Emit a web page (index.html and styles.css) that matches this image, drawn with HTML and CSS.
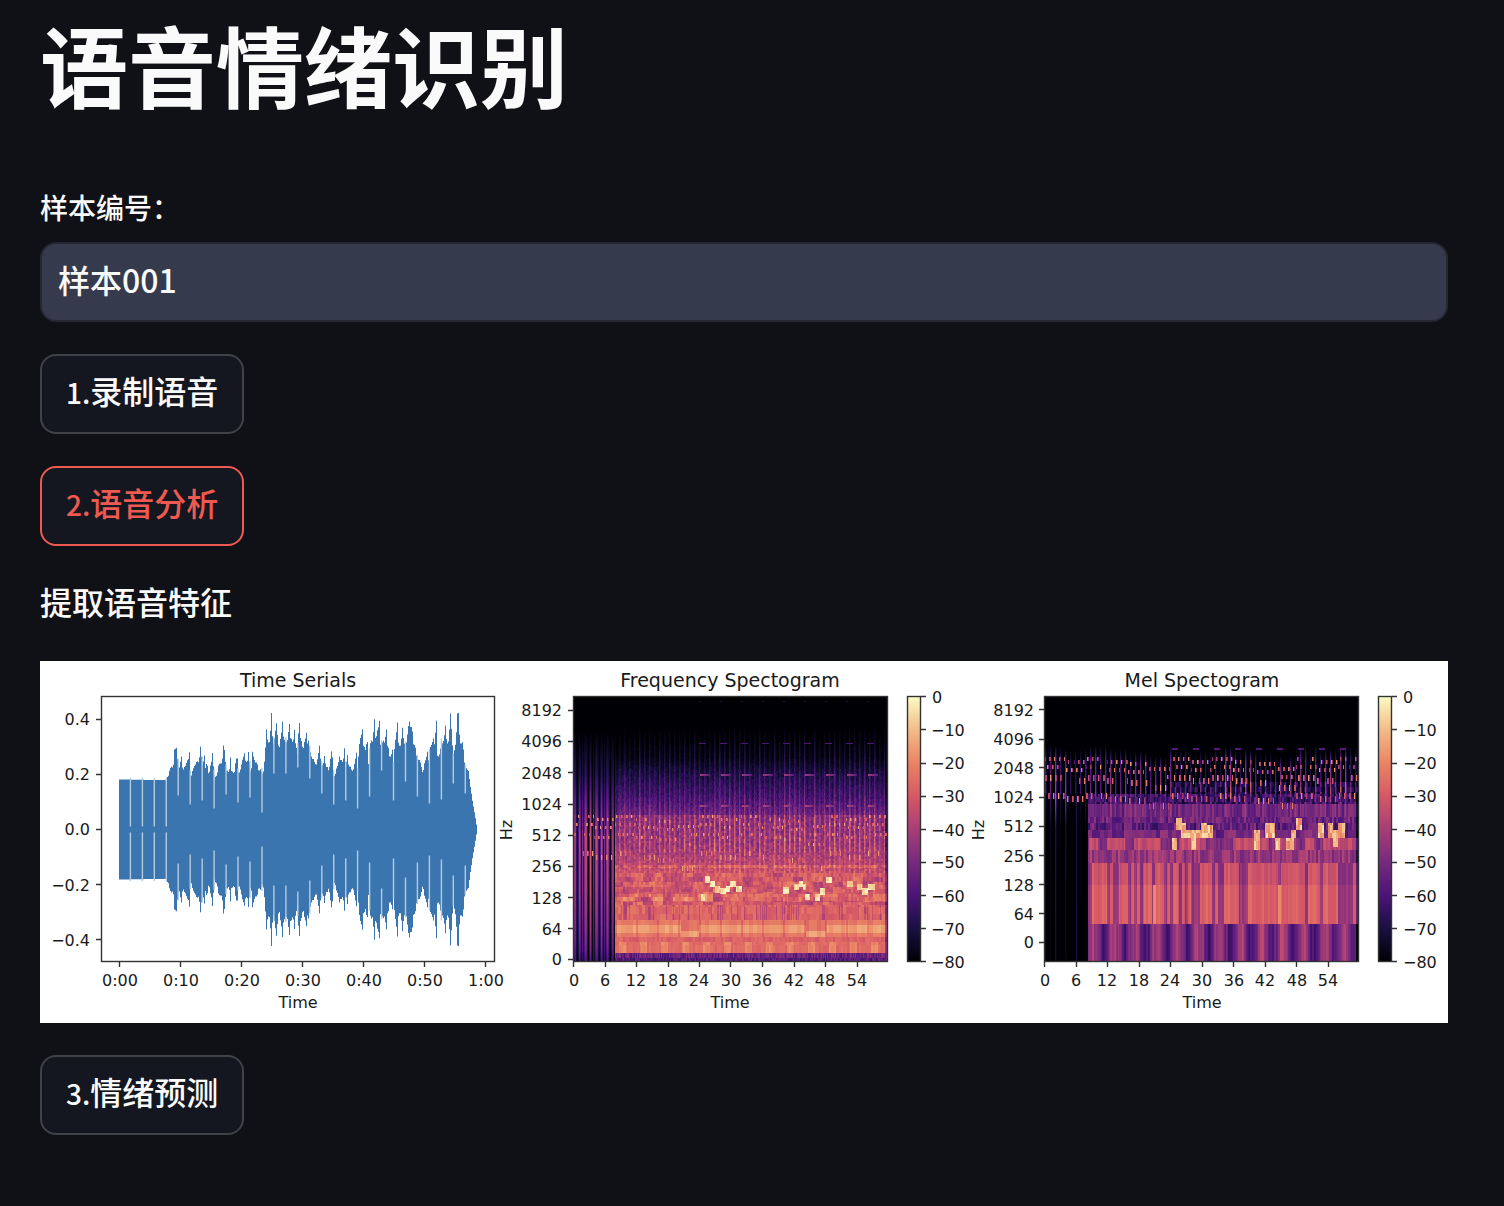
FILE: index.html
```html
<!DOCTYPE html>
<html lang="zh-CN">
<head>
<meta charset="utf-8">
<meta name="viewport" content="width=device-width, initial-scale=1">
<title>语音情绪识别</title>
<link rel="stylesheet" href="styles.css">
</head>
<body>
<main class="page">
  <h1 class="title">语音情绪识别</h1>
  <div class="field">
    <label class="field-label" for="sample">样本编号：</label>
    <input class="field-input" id="sample" type="text" value="样本001">
  </div>
  <button class="btn" type="button"><span class="num">1.</span>录制语音</button>
  <button class="btn btn-active" type="button"><span class="num">2.</span>语音分析</button>
  <p class="note">提取语音特征</p>
  <figure class="figure">
    <svg class="plots" viewBox="0 0 1408 362" role="img" aria-label="Time Serials, Frequency Spectogram, Mel Spectogram">
      <defs>
        <linearGradient id="magma" x1="0" y1="1" x2="0" y2="0"></linearGradient>
      </defs>

      <!-- waveform -->
      <path class="wave" id="wave"></path>
      <path class="gaps" id="gaps"></path>
      <rect class="frame" x="61.5" y="35.5" width="393" height="265"></rect>
      <path class="frame" d="M56 58.5h5M56 113.5h5M56 168.5h5M56 223.5h5M56 278.5h5M79.5 301v5M140.5 301v5M201.5 301v5M262.5 301v5M323.5 301v5M384.5 301v5M445.5 301v5"></path>
      <text class="head" x="258" y="26">Time Serials</text>
      <g class="right">
        <text x="50" y="64">0.4</text><text x="50" y="119">0.2</text><text x="50" y="174">0.0</text><text x="50" y="230">−0.2</text><text x="50" y="285">−0.4</text>
      </g>
      <g class="mid">
        <text x="80" y="325">0:00</text><text x="141" y="325">0:10</text><text x="202" y="325">0:20</text><text x="263" y="325">0:30</text><text x="324" y="325">0:40</text><text x="385" y="325">0:50</text><text x="446" y="325">1:00</text>
        <text x="258" y="347">Time</text>
      </g>

      <!-- frequency spectrogram -->
      <g id="spec-freq" class="cells" transform="translate(533 36)"></g>
      <rect class="frame" x="533.5" y="35.5" width="314" height="265"></rect>
      <path class="frame" d="M528 49.5h5M528 80.5h5M528 111.5h5M528 143.5h5M528 174.5h5M528 205.5h5M528 236.5h5M528 267.5h5M528 298.5h5M533.5 301v5M565.5 301v5M596.5 301v5M628.5 301v5M659.5 301v5M690.5 301v5M722.5 301v5M754.5 301v5M785.5 301v5M817.5 301v5"></path>
      <text class="head" x="690" y="26">Frequency Spectogram</text>
      <g class="right">
        <text x="522" y="55">8192</text><text x="522" y="86">4096</text><text x="522" y="118">2048</text><text x="522" y="149">1024</text><text x="522" y="180">512</text><text x="522" y="211">256</text><text x="522" y="243">128</text><text x="522" y="274">64</text><text x="522" y="304">0</text>
      </g>
      <g class="mid">
        <text x="534" y="325">0</text><text x="565" y="325">6</text><text x="596" y="325">12</text><text x="628" y="325">18</text><text x="659" y="325">24</text><text x="691" y="325">30</text><text x="722" y="325">36</text><text x="754" y="325">42</text><text x="785" y="325">48</text><text x="817" y="325">54</text>
        <text x="690" y="347">Time</text>
        <text transform="translate(472 169) rotate(-90)">Hz</text>
      </g>
      <rect class="frame" fill="url(#magma)" x="867.5" y="35.5" width="13" height="265"></rect>
      <path class="frame" d="M881 35.5h5M881 68.5h5M881 102.5h5M881 135.5h5M881 168.5h5M881 201.5h5M881 234.5h5M881 267.5h5M881 300.5h5"></path>
      <g class="left">
        <text x="892" y="42">0</text><text x="891" y="75">−10</text><text x="891" y="108">−20</text><text x="891" y="141">−30</text><text x="891" y="175">−40</text><text x="891" y="207">−50</text><text x="891" y="241">−60</text><text x="891" y="274">−70</text><text x="891" y="307">−80</text>
      </g>

      <!-- mel spectrogram -->
      <g id="spec-mel" class="cells" transform="translate(1004 36)"></g>
      <rect class="frame" x="1004.5" y="35.5" width="314" height="265"></rect>
      <path class="frame" d="M999 48.5h5M999 78.5h5M999 106.5h5M999 136.5h5M999 165.5h5M999 194.5h5M999 223.5h5M999 252.5h5M999 281.5h5M1004.5 301v5M1036.5 301v5M1067.5 301v5M1099.5 301v5M1130.5 301v5M1162.5 301v5M1193.5 301v5M1225.5 301v5M1256.5 301v5M1288.5 301v5"></path>
      <text class="head" x="1162" y="26">Mel Spectogram</text>
      <g class="right">
        <text x="994" y="55">8192</text><text x="994" y="84">4096</text><text x="994" y="113">2048</text><text x="994" y="142">1024</text><text x="994" y="171">512</text><text x="994" y="201">256</text><text x="994" y="230">128</text><text x="994" y="259">64</text><text x="994" y="287">0</text>
      </g>
      <g class="mid">
        <text x="1005" y="325">0</text><text x="1036" y="325">6</text><text x="1067" y="325">12</text><text x="1099" y="325">18</text><text x="1130" y="325">24</text><text x="1162" y="325">30</text><text x="1194" y="325">36</text><text x="1225" y="325">42</text><text x="1257" y="325">48</text><text x="1288" y="325">54</text>
        <text x="1162" y="347">Time</text>
        <text transform="translate(944 169) rotate(-90)">Hz</text>
      </g>
      <rect class="frame" fill="url(#magma)" x="1338.5" y="35.5" width="13" height="265"></rect>
      <path class="frame" d="M1352 35.5h5M1352 68.5h5M1352 102.5h5M1352 135.5h5M1352 168.5h5M1352 201.5h5M1352 234.5h5M1352 267.5h5M1352 300.5h5"></path>
      <g class="left">
        <text x="1363" y="42">0</text><text x="1363" y="75">−10</text><text x="1363" y="108">−20</text><text x="1363" y="141">−30</text><text x="1363" y="175">−40</text><text x="1363" y="207">−50</text><text x="1363" y="241">−60</text><text x="1363" y="274">−70</text><text x="1363" y="307">−80</text>
      </g>
    </svg>
  </figure>
  <button class="btn" type="button"><span class="num">3.</span>情绪预测</button>
</main>
<script src="plots.js"></script>
</body>
</html>
```
FILE: styles.css
```css
* {
  box-sizing: border-box;
}

body {
  margin: 0;
  background: #101116;
  color: #fafafa;
  font-family: "Noto Sans CJK SC", "Noto Sans", sans-serif;
  font-size: 32px;
  font-weight: 500;
  line-height: 46px;
}

.page {
  display: flex;
  flex-direction: column;
  align-items: flex-start;
  gap: 32px;
  padding: 10px 56px 72px 40px;
}

.title {
  margin: 0;
  padding-bottom: 36px;
  font-size: 88px;
  font-weight: 700;
  line-height: 106px;
}

.field {
  display: flex;
  flex-direction: column;
  gap: 12px;
  width: 100%;
}

.field-label {
  font-size: 28px;
  line-height: 46px;
}

.field-input {
  width: 100%;
  height: 80px;
  padding: 0 16px 6px;
  border: 2px solid #262831;
  border-radius: 16px;
  background: #363a4d;
  color: #fafafa;
  font: inherit;
}

.btn {
  height: 80px;
  padding: 0 24px 6px;
  border: 2px solid #414248;
  border-radius: 16px;
  background: #14171f;
  color: #fafafa;
  font: inherit;
  white-space: nowrap;
}

.btn-active {
  border-color: #ee5a51;
  color: #ee5a51;
}

.num {
  font-size: 28px;
}

.note {
  margin: 0;
  padding-bottom: 5px;
}

.figure {
  width: 100%;
  margin: 0;
  background: #fff;
}

.plots {
  display: block;
  width: 100%;
  height: auto;
  font-family: "DejaVu Sans", sans-serif;
  font-size: 16px;
  font-weight: 400;
  line-height: normal;
  fill: #1a1a1a;
}

.head {
  font-size: 19px;
  text-anchor: middle;
}

.mid {
  text-anchor: middle;
}

.right {
  text-anchor: end;
}

.frame {
  stroke: #333;
  stroke-width: 1.4;
}

.frame:not([fill]) {
  fill: none;
}

.wave {
  fill: #3b75af;
}

.gaps {
  fill: none;
  stroke: #b4cadf;
  stroke-width: 1.4;
}

.cells {
  shape-rendering: crispEdges;
}
```
FILE: plots.js
```js
(() => {
const NS = 'http://www.w3.org/2000/svg';
const STOPS = [[0,0,4],[26,16,66],[75,20,120],[118,42,125],[168,62,118],[214,88,102],[234,132,100],[242,188,136],[251,251,196]];

function magma(v) {
  const p = Math.max(0, Math.min(0.9999, v)) * 8;
  const i = Math.floor(p), f = p - i;
  return 'rgb(' + STOPS[i].map((c, k) => Math.round(c + (STOPS[i + 1][k] - c) * f)).join() + ')';
}

function noise(a, b, seed) {
  let h = Math.imul(a + 17, 374761393) ^ Math.imul(b + 31, 668265263) ^ Math.imul(seed + 7, 1442695041);
  h = Math.imul(h ^ (h >>> 13), 1274126177);
  h = Math.imul(h ^ (h >>> 15), 2246822519);
  return ((h ^ (h >>> 16)) >>> 0) / 4294967296;
}

const grad = document.getElementById('magma');
for (let i = 0; i <= 8; i++) {
  const s = document.createElementNS(NS, 'stop');
  s.setAttribute('offset', i / 8);
  s.setAttribute('stop-color', 'rgb(' + STOPS[i].join() + ')');
  grad.append(s);
}

/* Waveform envelope: pairs of time position and peak, in thirds of a unit. */
const ENV = [237,150,378,148,385,163,392,198,400,203,403,243,407,246,410,226,414,208,418,203,423,213,430,193,437,203,441,225,448,226,450,173,455,178,462,198,468,208,476,213,481,243,484,238,487,208,491,220,495,203,500,200,507,186,513,215,517,226,521,198,523,163,530,183,537,206,545,208,549,246,554,246,558,188,567,193,571,213,574,196,583,183,586,213,590,221,593,178,598,173,605,208,611,226,615,213,622,218,625,230,628,208,633,188,637,228,642,223,648,208,655,193,662,190,666,178,672,193,676,248,679,298,682,273,690,278,694,351,698,293,702,268,708,313,711,313,717,253,721,283,727,321,730,298,735,268,742,278,748,315,752,278,758,283,763,296,767,273,773,238,776,322,780,288,785,273,790,263,797,286,805,273,809,248,815,223,823,223,830,208,836,248,840,238,845,198,853,216,860,193,867,198,872,228,877,228,881,173,890,193,898,213,905,213,913,241,917,198,922,218,928,208,935,188,942,198,947,226,951,218,953,178,957,263,966,295,970,268,976,238,980,266,986,208,992,273,997,278,1002,325,1007,283,1012,318,1018,321,1021,258,1026,263,1032,273,1037,301,1042,268,1046,256,1050,218,1056,233,1060,188,1064,268,1071,315,1076,268,1082,258,1087,303,1092,268,1098,253,1106,318,1118,313,1121,268,1126,258,1132,218,1142,216,1147,190,1155,208,1160,228,1166,223,1171,253,1178,268,1183,263,1188,320,1193,228,1200,241,1205,273,1211,288,1216,308,1222,278,1226,273,1231,345,1235,318,1240,223,1245,253,1248,268,1253,361,1256,308,1261,273,1268,273,1272,238,1276,188,1286,175,1290,138,1298,83,1305,43,1309,18,1312,0];
const MID = 168.5;

function envAt(x) {
  for (let i = 2; i < ENV.length; i += 2) {
    if (ENV[i] / 3 >= x) {
      const f = (x * 3 - ENV[i - 2]) / (ENV[i] - ENV[i - 2]);
      return (ENV[i - 1] + (ENV[i + 1] - ENV[i - 1]) * f) / 3;
    }
  }
  return 0;
}

/* Peaks keep their full height; the columns between them fall a little short. */
const peaks = new Set();
for (let i = 3; i < ENV.length - 2; i += 2) {
  if (ENV[i] > ENV[i - 2] && ENV[i] >= ENV[i + 2]) peaks.add(Math.round(ENV[i - 1] / 3));
}
const upper = [], lower = [];
for (let x = 79; x < 438; x++) {
  let a = envAt(x + 0.5);
  if (x > 127 && x < 425 && !peaks.has(x)) a -= 1 + 6 * noise(x >> 1, 0, 40);
  if (peaks.has(x)) a = Math.max(a, envAt(x)) + 2;
  upper.push(`${x} ${(MID - a).toFixed(1)}L${x + 1} ${(MID - a).toFixed(1)}`);
  lower.unshift(`${x + 1} ${(MID + a).toFixed(1)}L${x} ${(MID + a).toFixed(1)}`);
}
document.getElementById('wave').setAttribute('d', 'M' + upper.concat(lower).join('L') + 'Z');

const GAPS = [3,3,3,3,34,25,29,21,35,27,32,17,56,56,62,51,36,25,29,21,33,59,29,48,33,26,30,46,36];
document.getElementById('gaps').setAttribute('d', GAPS.map((g, i) => {
  const x = 90.4 + i * 11.96, e = envAt(x) + 2;
  return `M${x.toFixed(1)} ${MID - e}V${MID - g}M${x.toFixed(1)} ${MID + g}V${MID + e}`;
}).join(''));

const W = 314, H = 264;

function draw(id, value) {
  const levels = 56, paths = Array.from({ length: levels }, () => []);
  for (let y = 0; y < H; y++) {
    let start = 0, prev = -1;
    for (let x = 0; x <= W; x++) {
      const q = x === W ? -2 : Math.max(0, Math.min(levels - 1, Math.floor(value(x, y) * levels)));
      if (q !== prev) {
        if (prev >= 0) paths[prev].push(`M${start} ${y}h${x - start}v1h${start - x}z`);
        start = x;
        prev = q;
      }
    }
  }
  const g = document.getElementById(id);
  paths.forEach((p, i) => {
    if (!p.length) return;
    const el = document.createElementNS(NS, 'path');
    el.setAttribute('fill', magma(i / (levels - 1)));
    el.setAttribute('d', p.join(''));
    g.append(el);
  });
}

const inBox = (list, x, y) => list.some(b => x >= b[0] && x < b[1] && y >= b[2] && y < b[3]);
const lerp = (pts, y) => {
  for (let i = 1; i < pts.length; i++) {
    if (y <= pts[i][0]) {
      const [a, va] = pts[i - 1], [b, vb] = pts[i];
      return va + (vb - va) * (y - a) / (b - a);
    }
  }
  return pts[pts.length - 1][1];
};

/* How far the arpeggio dots sit below their first pitch, one entry per bar. */
const DROP = [0, 3, 0, 3, 5, 10, 0, 3, 0, 3, 5, 10, 0, 3, 0];
const chord = x => DROP[Math.floor(x / 21)] || 0;

const TUNE1 = [[128,132,197,204],[132,137,179,186],[137,142,184,190],[142,147,189,196],[147,153,191,197],[153,157,189,195],[157,163,184,190],[163,169,189,195],[210,216,190,197],[221,226,187,193],[226,230,184,190],[230,233,187,193],[232,237,197,203],[242,247,197,204],[247,252,191,198],[253,259,180,186],[274,280,184,190],[284,289,187,193],[289,295,191,198],[295,302,187,193]];

draw('spec-freq', (x, y) => {
  const beat = x % 21;
  const late = x > 311 ? 0.25 : 0;
  const streak = noise(x, 0, 1);
  const hit = noise(Math.floor(x / 5), 3, 1);
  const pulse = (x % 5 === 1 ? 1 : x % 5 === 2 ? 0.5 : 0) * (0.4 + 0.8 * hit);
  const d = chord(x);
  const rows = [118, 126, 136, 154 + (d >> 1)];
  for (let k = 0; k < 4; k++) {
    const off = (x + k * 2 + Math.floor(x / 21)) % 5;
    const ry = rows[k] + d;
    if (off < 2 && y >= ry && y < ry + (k > 2 ? 5 : 3) && noise(Math.floor(x / 5), k, 4) > 0.22) return 0.6 + 0.24 * noise(x, k, 5) - (off ? 0.14 : 0);
  }
  if (x < 42) {
    const s = [0.75,0.95,0.8,0.4,0.1,0.5,0.95,0.7,0.1,0.65,0.35][x % 11] * (0.75 + 0.25 * streak);
    return s * lerp([[0, 0], [30, 0], [75, 0.2], [112, 0.46], [140, 0.66], [190, 0.62], [235, 0.5], [252, 0.42], [264, 0.3]], y);
  }
  if (x >= 126 && y >= 77 && y < 79 && beat > 0 && beat < 11) return 0.5 - beat * 0.02;
  if (x >= 126 && y >= 108 && y < 110 && beat > 0 && beat < 9) return 0.55 - beat * 0.02;
  if (x >= 126 && y >= 46 && y < 47 && beat < 7) return 0.26;
  if (x >= 126 && y === 4 && beat < 2) return 0.15;
  if (y < 118) {
    const base = lerp([[0, 0], [30, 0], [60, 0.03], [80, 0.14], [100, 0.23], [118, 0.35]], y);
    const grain = y < 50 ? 0 : (noise(x, y >> 1, 2) - 0.5) * lerp([[50, 0], [75, 0.07], [118, 0.1]], y);
    return base * (0.8 + 0.25 * streak) + grain + pulse * lerp([[0, 0], [25, 0], [60, 0.11], [118, 0.14]], y) - late * 0.6;
  }
  if (y < 176) {
    const base = lerp([[118, 0.38], [150, 0.45], [165, 0.52], [176, 0.58]], y);
    return base + (noise(x >> 1, y >> 1, 3) - 0.5) * 0.13 + pulse * (y < 155 ? 0.22 : 0.1) + (y >= 168 && y < 171 && hit > 0.3 ? 0.1 : 0) - late;
  }
  if (inBox(TUNE1, x, y)) return 0.86 + 0.13 * noise(x >> 1, y >> 2, 8);
  if (y < 208) {
    const bar = noise(Math.floor(x / 10), Math.floor(y / 5), 6);
    return 0.53 + bar * 0.17 + (noise(x >> 1, y >> 2, 7) - 0.5) * 0.12 + (y > 196 && y < 204 && x % 25 < 15 ? 0.08 : 0) - late;
  }
  if (y < 223) return 0.61 + 0.1 * noise(Math.floor(x / 3), Math.floor(y / 7), 9) - (streak > 0.86 ? 0.1 : 0) - late;
  if (y < 240) {
    const low = x > 107 && x < 126 || x > 232 && x < 253;
    return (low ? (y < 234 ? 0.66 : 0.77) : y < 228 || y > 235 ? 0.69 : 0.77) + 0.06 * noise(x >> 2, 1, 10) - (x % 21 < 2 ? 0.08 : 0) - late;
  }
  if (y < 245) return 0.61 + 0.08 * noise(x >> 1, 2, 11) - late;
  if (y < 256) return (x % 21 > 3 && x % 21 < 11 ? 0.73 : 0.65) + 0.05 * noise(x >> 1, y >> 3, 12) - late;
  return 0.26 + 0.16 * noise(x, y > 260 ? 1 : 0, 13) - (y > 260 ? 0.06 : 0);
});

const TUNE2 = [[128,133,141,153],[132,138,121,133],[137,142,126,141],[142,157,133,141],[147,152,141,153],[157,163,126,141],[163,169,128,141],[210,216,133,153],[221,231,126,141],[231,236,141,153],[242,250,141,153],[247,252,133,141],[252,258,121,133],[274,280,126,141],[284,289,126,141],[289,294,133,150],[294,301,126,141]];

draw('spec-mel', (x, y) => {
  const d = chord(x);
  const late = x > 311 ? 0.3 : 0;
  const streak = noise(x, 0, 21);
  const hit = noise(Math.floor(x / 5), 3, 21);
  const pulse = (x % 5 === 1 ? 1 : x % 5 === 2 ? 0.4 : 0) * (0.3 + 0.9 * hit);
  if (x >= 126 && y >= 51 && y < 53 && x % 21 > 1 && x % 21 < 8) return 0.28;
  if (inBox(TUNE2, x, y)) return 0.74 + 0.2 * noise(x >> 1, Math.floor(y / 8), 25);
  const rows = [60, 68, 78, 96];
  for (let k = 0; k < 4; k++) {
    const off = (x + k * 2 + Math.floor(x / 21)) % 5;
    const ry = rows[k] + d;
    if (off < 2 && y >= ry && y < ry + (k > 1 ? 6 : 4) && noise(Math.floor(x / 5), k, 22) > 0.2) return (off ? 0.24 : 0.48) + 0.32 * noise(x, k, 23);
  }
  if (y < 97) {
    let v = pulse * lerp([[0, 0], [48, 0], [62, 0.32], [97, 0.42]], y + d * -1);
    if (x > 126 && y > 84) v += 0.2 * noise(x >> 1, Math.floor(y / 5), 24);
    return v;
  }
  if (x < 44) return pulse * lerp([[97, 0.5], [112, 0.32], [130, 0.12], [264, 0.08]], y) * hit + (x === 32 ? 0.13 : 0);
  if (y < 107) return 0.08 + 0.24 * noise(x >> 1, Math.floor(y / 5), 26) + pulse * 0.14 - late;
  if (y < 120) return 0.28 + 0.16 * noise(x >> 1, 1, 27) + pulse * 0.06 - late;
  if (y < 126) return 0.24 + 0.2 * noise(x >> 1, 2, 27) - late;
  if (y < 133) return 0.18 + 0.26 * noise(x >> 1, 3, 27) - late;
  if (y < 141) return 0.26 + 0.2 * noise(x >> 2, 4, 27) - late;
  if (y < 153) return (noise(Math.floor(x / 9), 5, 28) > 0.45 ? 0.5 : 0.34) + 0.12 * noise(x >> 1, 5, 28) - late;
  if (y < 166) return 0.36 + 0.18 * noise(x >> 1, 6, 27) - late;
  const shade = noise(Math.floor(x / 3), 7, 29) < 0.38 ? 0 : 1;
  const fine = noise(x >> 1, 9, 29);
  if (y < 188) return 0.38 + 0.18 * shade + 0.09 * fine - late;
  if (y < 227) {
    if ((x > 108 && x < 112) || (x > 233 && x < 237)) return 0.76;
    return 0.42 + 0.18 * shade + 0.09 * fine - late;
  }
  return 0.37 + 0.12 * Math.cos((x - 49) / 21 * 2 * Math.PI) + 0.14 * (noise(x >> 1, 8, 31) - 0.5) + 0.02 * streak - late;
});
})();
```
